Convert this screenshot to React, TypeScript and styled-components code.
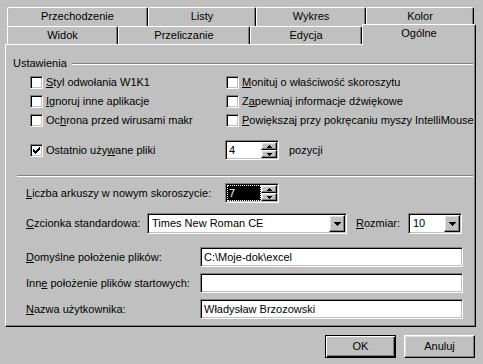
import React from "react";
import styled, { createGlobalStyle, css } from "styled-components";

const GlobalStyle = createGlobalStyle`
  html, body {
    margin: 0;
    padding: 0;
    background: #c0c0c0;
  }
  body {
    font-family: "Liberation Sans", Arial, sans-serif;
    font-size: 11px;
    line-height: 13px;
    color: #000;
  }
  * {
    box-sizing: border-box;
  }
`;

const raised = css`
  border: 1px solid;
  border-color: #fff #000 #000 #fff;
  box-shadow: inset -1px -1px #808080, inset 1px 1px #dfdfdf;
  background: #c0c0c0;
`;

const sunken = css`
  border: 1px solid;
  border-color: #808080 #fff #fff #808080;
  box-shadow: inset 1px 1px #000, inset -1px -1px #c0c0c0;
  background: #fff;
  padding: 1px;
`;

const Dialog = styled.div`
  width: 483px;
  height: 364px;
  padding: 7px 0 0 5px;
  display: flex;
  flex-direction: column;
  background: #c0c0c0;
`;

const TabStrip = styled.div`
  position: relative;
  z-index: 1;
  display: flex;
  flex-direction: column;
  padding-left: 2px;
`;

const TabRow = styled.div<{ $h: number }>`
  display: flex;
  height: ${(p) => p.$h}px;
`;

const Tab = styled.div<{ $w: number; $active?: boolean }>`
  width: ${(p) => p.$w}px;
  height: ${(p) => (p.$active ? "21px" : "100%")};
  margin-top: ${(p) => (p.$active ? "-2px" : "0")};
  padding-bottom: ${(p) => (p.$active ? "3px" : "1px")};
  display: flex;
  align-items: center;
  justify-content: center;
  background: #c0c0c0;
  border-top: 1px solid #fff;
  border-left: 1px solid #fff;
  border-right: 1px solid #000;
  border-top-left-radius: 2px;
  border-top-right-radius: 2px;
  box-shadow: inset -1px 0 #808080;
  white-space: nowrap;
`;

const Panel = styled.div`
  width: 471px;
  height: 283px;
  border-top: 1px solid #fff;
  border-left: 1px solid #fff;
  border-right: 1px solid #000;
  border-bottom: 1px solid #000;
  box-shadow: inset -1px -1px #808080;
  display: flex;
  flex-direction: column;
`;

const GroupHeader = styled.div`
  display: flex;
  align-items: center;
  gap: 5px;
  height: 13px;
  margin-top: 12px;
  padding-left: 7px;
  padding-right: 2px;
`;

const Etched = styled.div`
  flex: 1;
  height: 2px;
  border-top: 1px solid #808080;
  border-bottom: 1px solid #fff;
`;

const Separator = styled(Etched)`
  flex: none;
  margin: 15px 2px 0 11px;
`;

const CheckGrid = styled.div<{ $top: number; $gap?: number; $h?: number }>`
  display: grid;
  grid-template-columns: 196px 1fr;
  row-gap: ${(p) => p.$gap ?? 6}px;
  grid-auto-rows: ${(p) => p.$h ?? 13}px;
  align-items: center;
  margin-top: ${(p) => p.$top}px;
  padding-left: 24px;
`;

const CheckItem = styled.div`
  display: flex;
  align-items: center;
  gap: 3px;
  white-space: nowrap;
`;

const Box = styled.div`
  ${sunken};
  width: 13px;
  height: 13px;
  display: flex;
  align-items: center;
  justify-content: center;
`;

const SpinCell = styled.div`
  display: flex;
  align-items: center;
  gap: 10px;
  margin-left: -1px;
`;

const FieldRow = styled.div<{ $top: number; $h: number }>`
  display: flex;
  align-items: center;
  height: ${(p) => p.$h}px;
  margin-top: ${(p) => p.$top}px;
  padding-left: 20px;
`;

const Label = styled.span<{ $w: number; $gapLeft?: number }>`
  width: ${(p) => p.$w}px;
  margin-left: ${(p) => p.$gapLeft ?? 0}px;
  flex: none;
  white-space: nowrap;
`;

const Spin = styled.div`
  ${sunken};
  width: 54px;
  height: 20px;
  display: flex;
`;

const EditText = styled.div<{ $selected?: boolean }>`
  flex: 1;
  display: flex;
  align-items: center;
  padding-left: 2px;
  background: ${(p) => (p.$selected ? "#000" : "#fff")};
  color: ${(p) => (p.$selected ? "#fff" : "#000")};
  outline: ${(p) => (p.$selected ? "1px dotted #fff" : "none")};
  outline-offset: -1px;
`;

const SpinButtons = styled.div`
  width: 16px;
  display: flex;
  flex-direction: column;
`;

const SpinButton = styled.div`
  ${raised};
  flex: 1;
  display: flex;
  align-items: center;
  justify-content: center;
`;

const Combo = styled.div<{ $w: number }>`
  ${sunken};
  width: ${(p) => p.$w}px;
  height: 21px;
  display: flex;
`;

const ComboText = styled.div`
  flex: 1;
  display: flex;
  align-items: center;
  padding-left: 3px;
  white-space: nowrap;
  overflow: hidden;
`;

const DropButton = styled.div`
  ${raised};
  width: 16px;
  display: flex;
  align-items: center;
  justify-content: center;
`;

const TextField = styled.div`
  ${sunken};
  width: 263px;
  height: 20px;
  display: flex;
  align-items: center;
  padding-left: 3px;
  white-space: nowrap;
`;

const ButtonRow = styled.div`
  width: 471px;
  display: flex;
  justify-content: flex-end;
  gap: 8px;
  margin-top: 8px;
  padding-right: 1px;
`;

const Button = styled.div<{ $default?: boolean }>`
  width: 71px;
  height: 23px;
  display: flex;
  align-items: center;
  justify-content: center;
  ${(p) =>
    p.$default
      ? css`
          border: 1px solid #000;
          box-shadow: inset 1px 1px #fff, inset -1px -1px #000, inset -2px -2px #808080;
        `
      : raised};
  background: #c0c0c0;
`;

const Acc = styled.u`
  text-decoration: underline;
  text-underline-offset: 1px;
`;

const CheckMark = () => (
  <svg width="7" height="7" viewBox="0 0 7 7" shapeRendering="crispEdges">
    <path
      fill="#000"
      d="M6 0h1v1H6z M5 1h2v1H5z M0 2h1v1H0z M4 2h3v1H4z M0 3h2v1H0z M3 3h3v1H3z M0 4h5v1H0z M1 5h3v1H1z M2 6h1v1H2z"
    />
  </svg>
);

const UpArrow = () => (
  <svg width="5" height="3" viewBox="0 0 5 3" shapeRendering="crispEdges">
    <path fill="#000" d="M2 0h1v1H2z M1 1h3v1H1z M0 2h5v1H0z" />
  </svg>
);

const DownArrow = ({ size = 5 }: { size?: number }) =>
  size === 7 ? (
    <svg width="7" height="4" viewBox="0 0 7 4" shapeRendering="crispEdges">
      <path fill="#000" d="M0 0h7v1H0z M1 1h5v1H1z M2 2h3v1H2z M3 3h1v1H3z" />
    </svg>
  ) : (
    <svg width="5" height="3" viewBox="0 0 5 3" shapeRendering="crispEdges">
      <path fill="#000" d="M0 0h5v1H0z M1 1h3v1H1z M2 2h1v1H2z" />
    </svg>
  );

const Check = ({ checked, children }: { checked?: boolean; children: React.ReactNode }) => (
  <CheckItem>
    <Box>{checked && <CheckMark />}</Box>
    <span>{children}</span>
  </CheckItem>
);

const SpinBox = ({ value, selected }: { value: string; selected?: boolean }) => (
  <Spin>
    <EditText $selected={selected}>{value}</EditText>
    <SpinButtons>
      <SpinButton>
        <UpArrow />
      </SpinButton>
      <SpinButton>
        <DownArrow />
      </SpinButton>
    </SpinButtons>
  </Spin>
);

const ComboBox = ({ value, width }: { value: string; width: number }) => (
  <Combo $w={width}>
    <ComboText>{value}</ComboText>
    <DropButton>
      <DownArrow size={7} />
    </DropButton>
  </Combo>
);

const backTabs = [
  { label: "Przechodzenie", w: 141 },
  { label: "Listy", w: 108 },
  { label: "Wykres", w: 110 },
  { label: "Kolor", w: 108 },
];

const frontTabs = [
  { label: "Widok", w: 111 },
  { label: "Przeliczanie", w: 132 },
  { label: "Edycja", w: 112 },
  { label: "Ogólne", w: 114, active: true },
];

export default function App() {
  return (
    <>
      <GlobalStyle />
      <Dialog>
        <TabStrip>
          <TabRow $h={19}>
            {backTabs.map((t) => (
              <Tab key={t.label} $w={t.w}>
                {t.label}
              </Tab>
            ))}
          </TabRow>
          <TabRow $h={18}>
            {frontTabs.map((t) => (
              <Tab key={t.label} $w={t.w} $active={t.active}>
                {t.label}
              </Tab>
            ))}
          </TabRow>
        </TabStrip>

        <Panel>
          <GroupHeader>
            <span>Ustawienia</span>
            <Etched />
          </GroupHeader>

          <CheckGrid $top={6}>
            <Check>
              <Acc>S</Acc>tyl odwołania W1K1
            </Check>
            <Check>
              <Acc>M</Acc>onituj o właściwość skoroszytu
            </Check>
            <Check>
              <Acc>I</Acc>gnoruj inne aplikacje
            </Check>
            <Check>
              Z<Acc>a</Acc>pewniaj informacje dźwiękowe
            </Check>
            <Check>
              Oc<Acc>h</Acc>rona przed wirusami makr
            </Check>
            <Check>
              <Acc>P</Acc>owiększaj przy pokręcaniu myszy IntelliMouse
            </Check>
          </CheckGrid>

          <CheckGrid $top={13} $h={20}>
            <Check checked>
              Ostatnio uży<Acc>w</Acc>ane pliki
            </Check>
            <SpinCell>
              <SpinBox value="4" />
              <span>pozycji</span>
            </SpinCell>
          </CheckGrid>

          <Separator />

          <FieldRow $top={6} $h={20}>
            <Label $w={199}>
              <Acc>L</Acc>iczba arkuszy w nowym skoroszycie:
            </Label>
            <SpinBox value="7" selected />
          </FieldRow>

          <FieldRow $top={10} $h={21}>
            <Label $w={121}>
              <Acc>C</Acc>zcionka standardowa:
            </Label>
            <ComboBox value="Times New Roman CE" width={200} />
            <Label $w={52} $gapLeft={9}>
              <Acc>R</Acc>ozmiar:
            </Label>
            <ComboBox value="10" width={54} />
          </FieldRow>

          <FieldRow $top={13} $h={20}>
            <Label $w={174}>
              <Acc>D</Acc>omyślne położenie plików:
            </Label>
            <TextField>C:\Moje-dok\excel</TextField>
          </FieldRow>

          <FieldRow $top={6} $h={20}>
            <Label $w={174}>
              Inn<Acc>e</Acc> położenie plików startowych:
            </Label>
            <TextField />
          </FieldRow>

          <FieldRow $top={6} $h={20}>
            <Label $w={174}>
              <Acc>N</Acc>azwa użytkownika:
            </Label>
            <TextField>Władysław Brzozowski</TextField>
          </FieldRow>
        </Panel>

        <ButtonRow>
          <Button $default>OK</Button>
          <Button>Anuluj</Button>
        </ButtonRow>
      </Dialog>
    </>
  );
}
